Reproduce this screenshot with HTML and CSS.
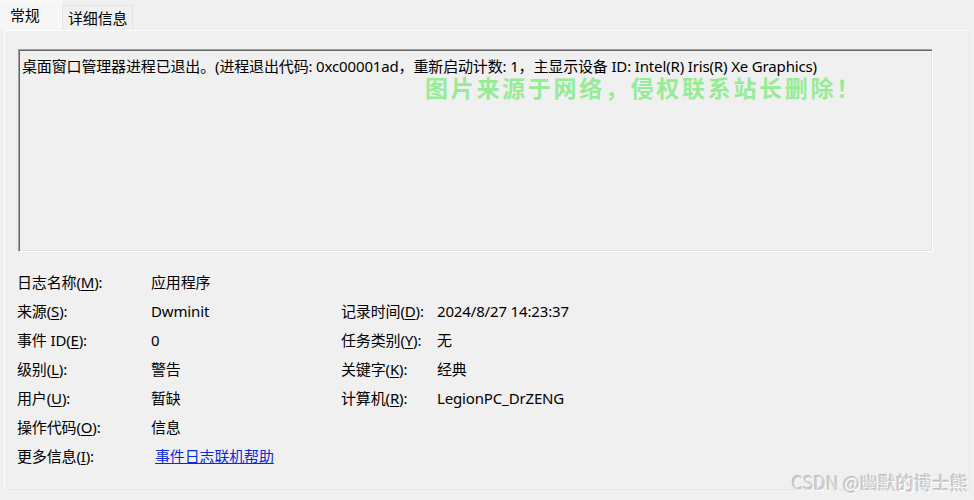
FILE: index.html
```html
<!DOCTYPE html>
<html lang="zh-CN">
  <head>
    <meta charset="UTF-8" />
    <title>事件属性</title>
    <link rel="stylesheet" href="styles.css">
  </head>
  <body>
    <div class="tabs">
      <div class="tab active">常规</div>
      <div class="tab">详细信息</div>
    </div>
    <div class="panel">
      <div class="message">桌面窗口管理器进程已退出。(进程退出代码: 0xc00001ad，重新启动计数: 1，主显示设备 ID: Intel(R) Iris(R) Xe Graphics)</div>
      <div class="watermark">图片来源于网络，侵权联系站长删除！</div>
      <div class="fields">
        <div class="label">日志名称(<u>M</u>):</div>
        <div class="value wide">应用程序</div>

        <div class="label">来源(<u>S</u>):</div>
        <div class="value">Dwminit</div>
        <div class="label">记录时间(<u>D</u>):</div>
        <div class="value">2024/8/27 14:23:37</div>

        <div class="label">事件 ID(<u>E</u>):</div>
        <div class="value">0</div>
        <div class="label">任务类别(<u>Y</u>):</div>
        <div class="value">无</div>

        <div class="label">级别(<u>L</u>):</div>
        <div class="value">警告</div>
        <div class="label">关键字(<u>K</u>):</div>
        <div class="value">经典</div>

        <div class="label">用户(<u>U</u>):</div>
        <div class="value">暂缺</div>
        <div class="label">计算机(<u>R</u>):</div>
        <div class="value">LegionPC_DrZENG</div>

        <div class="label">操作代码(<u>O</u>):</div>
        <div class="value wide">信息</div>

        <div class="label">更多信息(<u>I</u>):</div>
        <div class="value wide"><a href="#" class="help">事件日志联机帮助</a></div>
      </div>
    </div>
    <div class="csdn">CSDN @幽默的博士熊</div>
  </body>
</html>
```

FILE: styles.css
```css
body {
  margin: 0;
  width: 974px;
  height: 500px;
  overflow: hidden;
  background-color: #f0f0f0;
  font-family: "Noto Sans", "Noto Sans CJK SC", sans-serif;
  font-size: 15px;
  letter-spacing: -0.15px;
  color: #000;
  position: relative;
}
.tabs {
  display: flex;
  align-items: flex-end;
  height: 30px;
}
.tab {
  height: 25px;
  line-height: 24px;
  padding: 0 5px;
  border: 1px solid #e3e3e3;
  border-bottom: none;
  box-sizing: border-box;
  background-color: #f0f0f0;
}
.tab.active {
  height: 30px;
  line-height: 28px;
  padding: 0 10px 0 10px;
  width: 62px;
  background-color: #f6f6f6;
  border-color: #fafafa;
  border-left: none;
}
.panel {
  margin: 0 4px;
  height: 460px;
  box-sizing: border-box;
  border: 1px solid #fbfbfb;
  border-right-color: #e6e6e6;
  border-bottom-color: #e6e6e6;
  padding: 18px 0 0 13px;
  position: relative;
}
.message {
  width: 915px;
  height: 203px;
  box-sizing: border-box;
  border-top: 1px solid #a0a0a0;
  border-left: 1px solid #a0a0a0;
  border-right: 1px solid #ffffff;
  border-bottom: 1px solid #ffffff;
  box-shadow: inset 1px 1px 0 #696969, inset -1px -1px 0 #e3e3e3;
  padding: 7px 0 0 3px;
  line-height: 18px;
}
.watermark {
  position: absolute;
  left: 420px;
  top: 45px;
  font-family: "Noto Sans CJK SC", sans-serif;
  font-size: 23px;
  line-height: 23px;
  font-weight: bold;
  color: #96ec96;
  letter-spacing: 2.7px;
}
.fields {
  display: grid;
  grid-template-columns: 134px 190px 96px auto;
  grid-auto-rows: 29px;
  align-items: center;
  margin: 15px 0 0 -1px;
}
.value.wide {
  grid-column: 2 / 5;
}
u {
  text-underline-offset: 2px;
}
.help {
  color: #0a2bd6;
  text-decoration: underline;
  margin-left: 4px;
}
.csdn {
  position: absolute;
  right: 6px;
  bottom: 5px;
  font-family: "Noto Sans CJK SC", sans-serif;
  font-size: 18px;
  letter-spacing: 0;
  color: #d2d2d2;
  text-shadow: 1px 1px 0 #ffffff, -1px -1px 0 #bdbdbd;
}
```
